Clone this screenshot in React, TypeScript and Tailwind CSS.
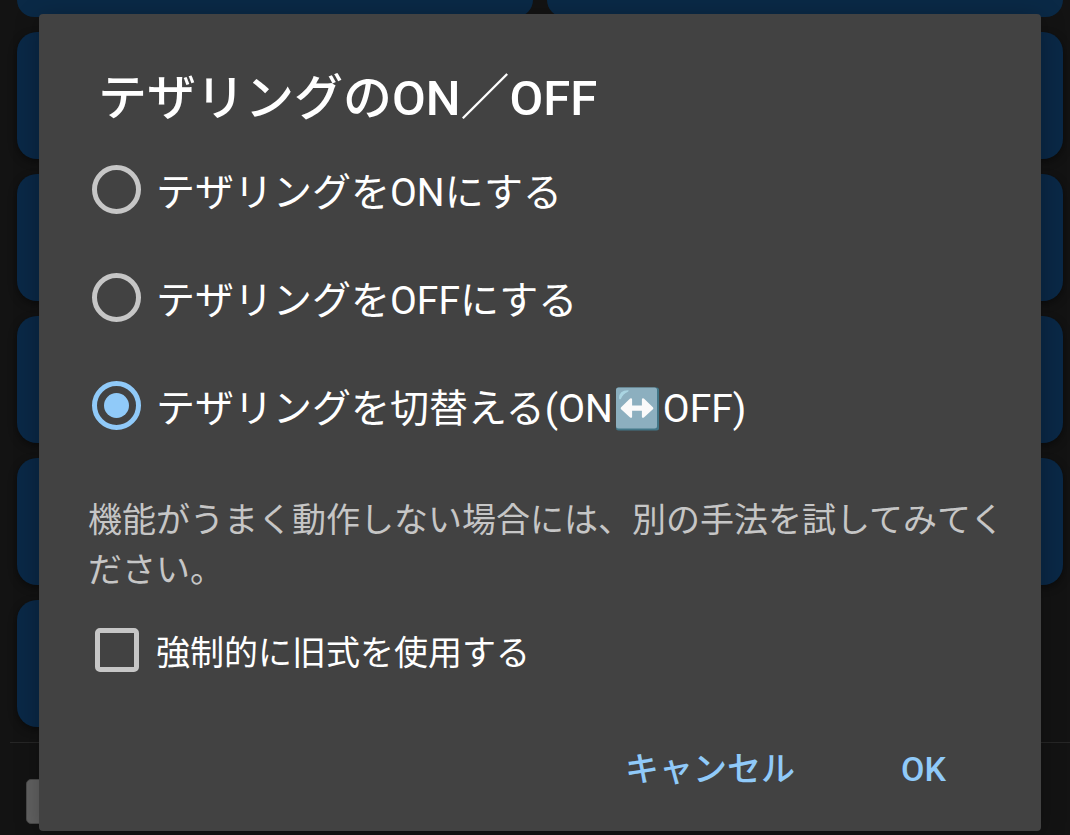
import React, { useState } from "react";

type Mode = "on" | "off" | "toggle";

const LeftRightIcon: React.FC = () => (
  <svg
    viewBox="0 0 44 44"
    className="inline-block size-[44px] mx-[3px] align-[-9px]"
    role="img"
    aria-label="↔️"
  >
    <rect x="0" y="0.5" width="43" height="43" rx="2.5" fill="#427687" />
    <rect x="0" y="0.5" width="41" height="41" rx="2.5" fill="#8cafbf" />
    <path d="M3 11 Q3 3.5 12 3.2 Q13.5 3.5 12 4.8 Q7 7 5 11.8 Q3.5 13.5 3 11Z" fill="#b4e1ed" opacity="0.75" />
    <path
      d="M5.1 20.2 14.1 11.6 Q15.8 10.6 16.1 12.4 V18.5 H25.9 V12.4 Q26.2 10.6 27.9 11.6 L36.9 20.2 Q37.9 21.2 36.9 22.2 L27.9 30.6 Q26.2 31.6 25.9 29.8 V23.8 H16.1 V29.8 Q15.8 31.6 14.1 30.6 L5.1 22.2 Q4.1 21.2 5.1 20.2Z"
      fill="#fafafa"
    />
  </svg>
);

const options: { id: Mode; label: React.ReactNode }[] = [
  { id: "on", label: "テザリングをONにする" },
  { id: "off", label: "テザリングをOFFにする" },
  {
    id: "toggle",
    label: (
      <>
        テザリングを切替える(ON
        <LeftRightIcon />
        OFF)
      </>
    ),
  },
];

const tile = "h-[127px] rounded-[20px] bg-[#0a2846] shadow-[0_3px_8px_#00000066]";

const App: React.FC = () => {
  const [mode, setMode] = useState<Mode>("toggle");
  const [legacy, setLegacy] = useState(false);

  return (
    <div className="relative min-h-screen overflow-hidden bg-[#131313] font-['Roboto','Noto_Sans_CJK_JP',sans-serif]">
      {/* ================= DIMMED PAGE ================= */}
      <div aria-hidden="true">
        <div className="grid grid-cols-2 gap-x-[14px] gap-y-[15px] pl-[17px] pr-[7px]">
          <div className="h-[17px] rounded-b-[20px] bg-[#0a2946]" />
          <div className="h-[17px] rounded-b-[20px] bg-[#0a2946]" />
          {Array.from({ length: 9 }, (_, i) => (
            <div key={i} className={tile} />
          ))}
        </div>
        <div className="mt-[15px] ml-[10px] border-t border-[#262626]" />
        <div className="mt-9 ml-[26px] h-[45px] w-24 rounded-[5px] border border-[#4a4a4a] bg-[#626262]" />
      </div>

      {/* ================= DIALOG ================= */}
      <div className="absolute inset-0 pt-[14px] pl-[39px] pr-[29px]">
        <div
          role="dialog"
          aria-modal="true"
          aria-labelledby="dialog-title"
          className="rounded-[4px] bg-[#424242] pt-[49px] pb-7 text-white shadow-[0_4px_24px_#00000044]"
        >
          <h1 id="dialog-title" className="pl-[59px] text-[49px] leading-[72px] font-medium">
            テザリングのON／OFF
          </h1>

          <div role="radiogroup" aria-labelledby="dialog-title">
            {options.map((o) => (
              <label key={o.id} className="flex h-[108px] items-center gap-[15px] pl-[53px] text-[39px] leading-[56px]">
                <input
                  type="radio"
                  name="mode"
                  checked={mode === o.id}
                  onChange={() => setMode(o.id)}
                  className="grid size-[49px] shrink-0 appearance-none place-items-center rounded-full border-5 border-[#c6c6c6] checked:border-[#90caf9] checked:before:size-[25px] checked:before:rounded-full checked:before:bg-[#90caf9] checked:before:content-['']"
                />
                <span className="pt-2">{o.label}</span>
              </label>
            ))}
          </div>

          <p className="mt-9 pl-[49px] pr-6 text-[34px] leading-[50px] text-[#c6c6c6]">
            機能がうまく動作しない場合には、別の手法を試してみてください。
          </p>

          <label className="flex h-[110px] items-center gap-[17px] pl-14 text-[34px] leading-[50px]">
            <input
              type="checkbox"
              checked={legacy}
              onChange={(e) => setLegacy(e.target.checked)}
              className="size-[44px] shrink-0 appearance-none rounded-[5px] border-5 border-[#c6c6c6] checked:bg-[#90caf9]"
            />
            <span className="pt-1.5">強制的に旧式を使用する</span>
          </label>

          <div className="mt-[30px] flex justify-end gap-[50px] pr-[67px] text-[34px] leading-[68px] font-medium text-[#90caf9]">
            <button type="button" className="px-7">
              キャンセル
            </button>
            <button type="button" className="px-7">
              OK
            </button>
          </div>
        </div>
      </div>
    </div>
  );
};

export default App;
